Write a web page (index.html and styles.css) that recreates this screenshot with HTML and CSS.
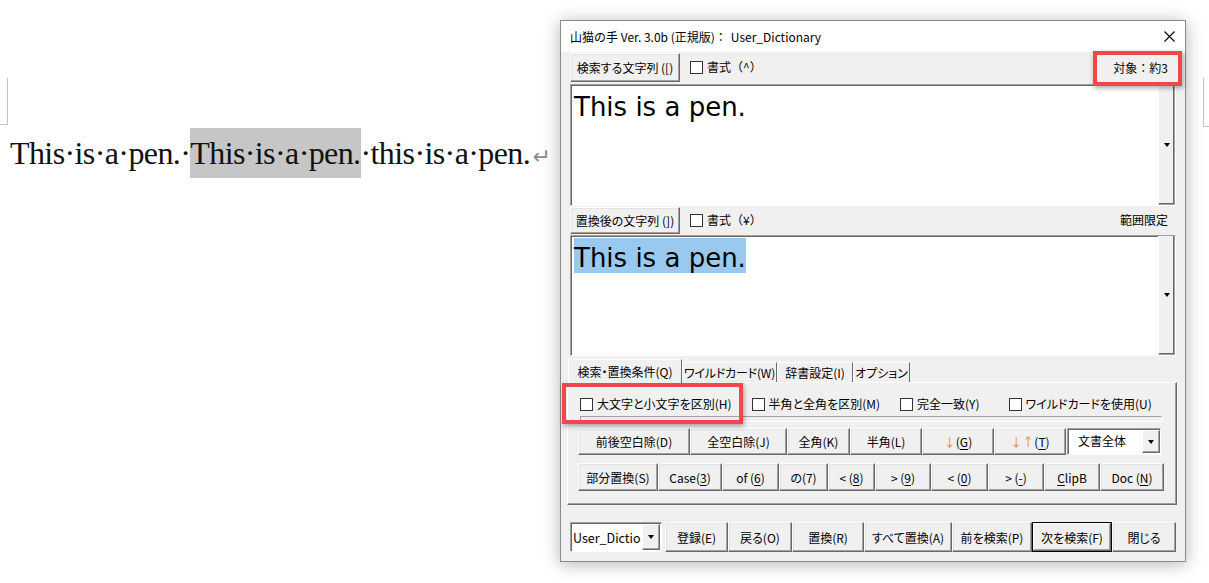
FILE: index.html
```html
<!DOCTYPE html>
<html lang="ja">
<head>
    <meta charset="utf-8" />
    <title>山猫の手</title>
    <link rel="stylesheet" href="styles.css">
</head>
<body>
    <!-- 文書 -->
    <div class="doc">
        <div class="marks">
            <span class="mark mark-left"></span>
            <span class="mark mark-right"></span>
        </div>
        <p class="doc-line">This·is·a·pen.·<span class="hl">This·is·a·pen.</span>·this·is·a·pen.<span class="para">↵</span></p>
    </div>

    <!-- ダイアログ -->
    <div class="dialog">
        <div class="titlebar">
            <span class="title">山猫の手 Ver. 3.0b (正規版)：</span>
            <span class="title title-dict">User_Dictionary</span>
            <svg class="close" width="11" height="11" viewBox="0 0 11 11">
                <path d="M0.5 0.5 L10.5 10.5 M10.5 0.5 L0.5 10.5" stroke="#000" stroke-width="1.1" fill="none"/>
            </svg>
        </div>

        <div class="dlg-body">
            <div class="field-row">
                <button class="btn btn-field">検索する文字列 ([)</button>
                <label class="chk"><span class="box"></span>書式（^）</label>
                <span class="note">対象：約3</span>
            </div>
            <div class="textbox">
                <div class="textbox-text"><span class="tx">This is a pen.</span></div>
                <div class="textbox-scroll"><span class="arrow"></span></div>
            </div>

            <div class="field-row field-row-2">
                <button class="btn btn-field btn-field-2">置換後の文字列 (])</button>
                <label class="chk"><span class="box"></span>書式（¥）</label>
                <span class="note">範囲限定</span>
            </div>
            <div class="textbox textbox-2">
                <div class="textbox-text"><span class="tx sel">This is a pen.</span></div>
                <div class="textbox-scroll"><span class="arrow"></span></div>
            </div>

            <div class="tabs">
                <span class="tab tab-active">検索・置換条件(Q)</span>
                <span class="tab tab-wild">ワイルドカード(W)</span>
                <span class="tab tab-dict">辞書設定(I)</span>
                <span class="tab tab-opt">オプション</span>
            </div>
            <div class="panel">
                <div class="chk-row">
                    <label class="chk"><span class="box"></span>大文字と小文字を区別(H)</label>
                    <label class="chk"><span class="box"></span>半角と全角を区別(M)</label>
                    <label class="chk"><span class="box"></span>完全一致(Y)</label>
                    <label class="chk chk-last"><span class="box"></span>ワイルドカードを使用(U)</label>
                </div>
                <div class="slider"></div>
                <div class="btn-row btn-row-1">
                    <button class="btn">前後空白除(D)</button>
                    <button class="btn">全空白除(J)</button>
                    <button class="btn">全角(K)</button>
                    <button class="btn">半角(L)</button>
                    <button class="btn"><span class="orange">↓</span>(<u>G</u>)</button>
                    <button class="btn"><span class="orange">↓↑</span>(<u>T</u>)</button>
                    <div class="combo">
                        <span class="combo-text">文書全体</span>
                        <span class="combo-btn"><span class="arrow"></span></span>
                    </div>
                </div>
                <div class="btn-row btn-row-2">
                    <button class="btn">部分置換(S)</button>
                    <button class="btn">Case(<u>3</u>)</button>
                    <button class="btn">of (<u>6</u>)</button>
                    <button class="btn">の(7)</button>
                    <button class="btn">&lt; (<u>8</u>)</button>
                    <button class="btn">&gt; (<u>9</u>)</button>
                    <button class="btn">&lt; (<u>0</u>)</button>
                    <button class="btn">&gt; (<u>-</u>)</button>
                    <button class="btn"><u>C</u>lipB</button>
                    <button class="btn">Doc (<u>N</u>)</button>
                </div>
            </div>

            <div class="bottom-row">
                <div class="combo combo-dict">
                    <span class="combo-text">User_Dictio</span>
                    <span class="combo-btn"><span class="arrow"></span></span>
                </div>
                <button class="btn">登録(E)</button>
                <button class="btn">戻る(O)</button>
                <button class="btn">置換(R)</button>
                <button class="btn">すべて置換(A)</button>
                <button class="btn">前を検索(P)</button>
                <button class="btn btn-default">次を検索(F)</button>
                <button class="btn">閉じる</button>
            </div>
        </div>

        <!-- 注釈の赤枠 -->
        <div class="callout callout-count"></div>
        <div class="callout callout-case"></div>
    </div>
</body>
</html>
```

FILE: styles.css
```css
body {
    margin: 0;
    width: 1209px;
    height: 583px;
    position: relative;
    overflow: hidden;
    background: #fff;
    font-family: "Noto Sans CJK JP", sans-serif;
}

/* 文書側 */
.doc {
    padding-top: 78px;
}
.marks {
    display: flex;
    justify-content: space-between;
    align-items: flex-start;
    height: 50px;
}
.mark-left {
    width: 7px;
    height: 46px;
    border-right: 1px solid #c4c4c4;
    border-bottom: 1px solid #c4c4c4;
}
.mark-right {
    width: 5px;
    height: 48px;
    border-left: 1px solid #c4c4c4;
    border-bottom: 1px solid #c4c4c4;
}
.doc-line {
    margin: 0 0 0 10px;
    font: 32px/50px "Liberation Serif", serif;
    letter-spacing: -0.6px;
    color: #111;
    white-space: nowrap;
}
.hl {
    display: inline-block;
    background: #c6c6c6;
}
.para {
    margin-left: 2px;
    font-family: "DejaVu Sans", sans-serif;
    font-size: 22px;
    letter-spacing: 0;
    color: #8c8c8c;
}

/* ダイアログ */
.dialog {
    position: absolute;
    left: 560px;
    top: 20px;
    width: 626px;
    height: 542px;
    box-sizing: border-box;
    border: 1px solid #8a8a8a;
    background: #f0f0f0;
    box-shadow: 0 2px 16px rgba(0, 0, 0, 0.3);
    display: flex;
    flex-direction: column;
    font-size: 12px;
    font-feature-settings: "palt";
    color: #000;
}
.titlebar {
    height: 31px;
    flex: none;
    background: #fff;
    display: flex;
    align-items: center;
    padding: 0 10px 0 9px;
    font-feature-settings: normal;
}
.title {
    font-size: 12px;
}
.title-dict {
    margin-left: 4px;
}
.close {
    margin-left: auto;
}
.dlg-body {
    flex: 1;
    display: flex;
    flex-direction: column;
    padding: 1px 9px 0;
}

.btn {
    font: inherit;
    font-size: 12px;
    color: #000;
    background: #f0f0f0;
    border: 1px solid;
    border-color: #fff #696969 #696969 #fff;
    box-shadow: inset -1px -1px #a0a0a0, inset 1px 1px #e3e3e3;
    padding: 0;
    margin: 0;
    white-space: nowrap;
}
.btn u {
    text-underline-offset: 2px;
}
.btn-default {
    border: 1px solid #000;
    box-shadow: inset -1px -1px #696969, inset 1px 1px #fff, inset -2px -2px #a0a0a0;
}
.orange {
    color: #e8892a;
}

.field-row {
    height: 31px;
    flex: none;
    display: flex;
    align-items: flex-start;
}
.btn-field {
    width: 110px;
    height: 29px;
}
.field-row-2 {
    height: 29px;
}
.btn-field-2 {
    height: 27px;
    margin-top: 1px;
}
.field-row .chk {
    margin: 5px 0 0 10px;
    font-feature-settings: normal;
}
.note {
    margin: 6px 8px 0 auto;
    font-size: 12px;
    font-feature-settings: normal;
}
.field-row-2 .note {
    margin-top: 5px;
}

.chk {
    display: flex;
    align-items: center;
    gap: 4px;
    font-size: 12px;
    line-height: 18px;
    white-space: nowrap;
}
.box {
    width: 11px;
    height: 11px;
    background: #fff;
    border: 1px solid #333;
}

.textbox {
    height: 122px;
    flex: none;
    box-sizing: border-box;
    display: flex;
    background: #fff;
    border: 1px solid;
    border-color: #a0a0a0 #fff #fff #a0a0a0;
    box-shadow: inset 1px 1px #696969;
}
.textbox-2 {
    height: 121px;
}
.textbox-text {
    flex: 1;
    padding: 2px 0 0 3px;
    font-family: "DejaVu Sans", sans-serif;
    font-size: 26px;
}
.tx {
    display: inline-block;
    padding-top: 5px;
    line-height: 30px;
}
.sel {
    background: #99c9ef;
}
.textbox-scroll {
    width: 15px;
    flex: none;
    display: flex;
    align-items: center;
    justify-content: center;
    background: #f0f0f0;
    border-left: 1px solid #fff;
    border-right: 1px solid #a0a0a0;
    border-bottom: 1px solid #a0a0a0;
    box-shadow: inset -1px -1px #696969;
}
.arrow {
    width: 0;
    height: 0;
    border-top: 4px solid #000;
    border-left: 3.5px solid transparent;
    border-right: 3.5px solid transparent;
}

/* タブ */
.tabs {
    height: 24px;
    flex: none;
    margin: 2px 0 0 -2px;
    display: flex;
    align-items: flex-end;
}
.tab {
    box-sizing: border-box;
    height: 20px;
    line-height: 19px;
    text-align: center;
    border: 1px solid;
    border-color: #fff #696969 transparent #fff;
    border-bottom: none;
    white-space: nowrap;
}
.tab-active {
    width: 114px;
    height: 24px;
    line-height: 24px;
    margin-bottom: -1px;
    background: #f0f0f0;
    position: relative;
    z-index: 1;
}
.tab-wild {
    width: 95px;
    letter-spacing: -0.2px;
}
.tab-dict {
    width: 76px;
}
.tab-opt {
    width: 57px;
}

.panel {
    height: 123px;
    flex: none;
    box-sizing: border-box;
    margin: 0 -1px 0 -3px;
    padding: 10px 14px 0 10px;
    border: 1px solid;
    border-color: #fff #696969 #696969 #fff;
    box-shadow: inset -1px -1px #a0a0a0;
}
.chk-row {
    height: 22px;
    display: flex;
    align-items: center;
    gap: 20px;
    padding-left: 2px;
}
.chk-last {
    margin-left: 9px;
}
.slider {
    height: 6px;
    box-sizing: border-box;
    margin: 1px 0 0 2px;
    border: 1px solid;
    border-color: #a0a0a0 #fff #fff #a0a0a0;
    background: #f0f0f0;
}
.btn-row {
    display: grid;
}
.btn-row-1 {
    height: 27px;
    margin-top: 6px;
    grid-template-columns: 112px 97px 63px 72px 72px 72px 95px;
}
.btn-row-2 {
    height: 28px;
    margin-top: 8px;
    grid-template-columns: 80px 64px 57px 49px 47px 56px 57px 56px 56px 64px;
}

.combo {
    display: flex;
    box-sizing: border-box;
    background: #fff;
    border: 1px solid;
    border-color: #a0a0a0 #fff #fff #a0a0a0;
    box-shadow: inset 1px 1px #696969;
    margin-left: 1px;
}
.combo-text {
    flex: 1;
    padding: 3px 0 0 10px;
    font-size: 12px;
    white-space: nowrap;
    overflow: hidden;
}
.combo-btn {
    width: 16px;
    flex: none;
    display: flex;
    align-items: center;
    justify-content: center;
    background: #f0f0f0;
    border: 1px solid;
    border-color: #fff #696969 #696969 #fff;
    box-shadow: inset -1px -1px #a0a0a0;
    margin: 1px 0 1px;
}

.bottom-row {
    height: 30px;
    margin-top: 17px;
    display: grid;
    grid-template-columns: 95px 63px 64px 72px 88px 80px 80px 64px;
    column-gap: 0;
}
.combo-dict {
    margin: 0 3px 0 0;
}
.combo-dict .combo-text {
    padding: 5px 0 0 2px;
    font-size: 12.5px;
    font-feature-settings: normal;
}
.combo-dict .combo-btn {
    margin: 1px 1px 1px 0;
}

/* 赤枠の注釈 */
.callout {
    position: absolute;
    border: 4px solid #f2474a;
    box-shadow: 1px 2px 5px rgba(0, 0, 0, 0.35);
}
.callout-count {
    left: 532px;
    top: 30px;
    width: 81px;
    height: 27px;
}
.callout-case {
    left: 1px;
    top: 362px;
    width: 173px;
    height: 33px;
}
```
